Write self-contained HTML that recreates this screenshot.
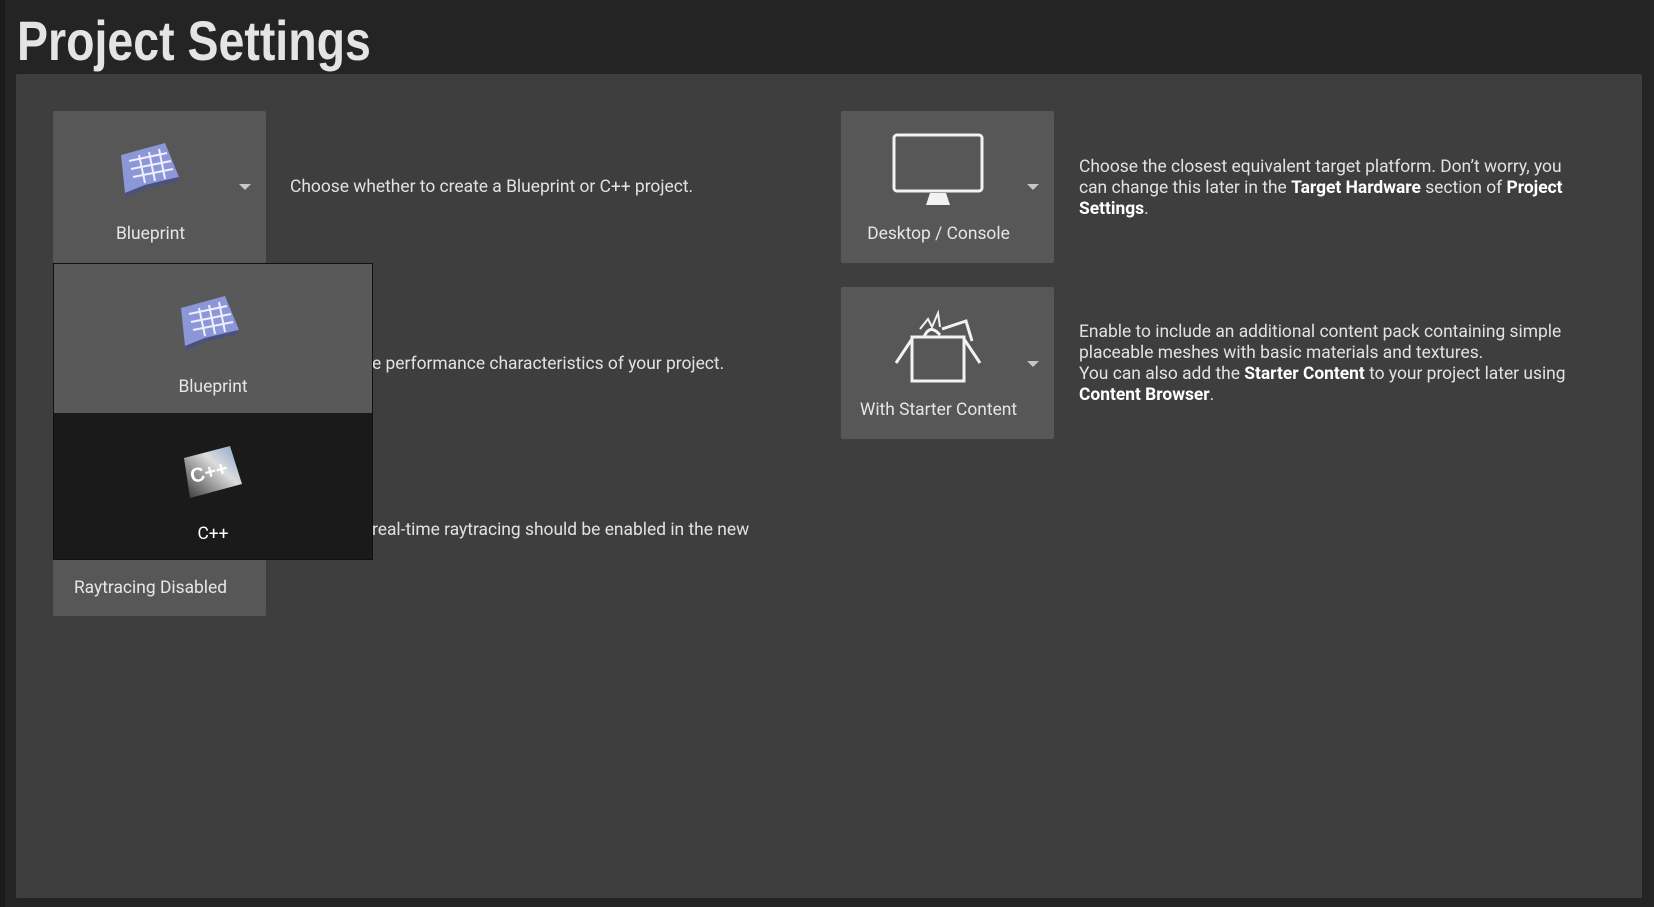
<!DOCTYPE html>
<html><head><meta charset="utf-8"><style>
*{margin:0;padding:0;box-sizing:border-box}
body{width:1654px;height:907px;background:#242424;overflow:hidden;position:relative;font-family:"Roboto","Liberation Sans",sans-serif;color:#e0e0e0}
.strip{position:absolute;left:0;top:0;width:5px;height:907px;background:#1a1a1a}
h1{position:absolute;left:17px;top:8px;font-family:"Liberation Sans Narrow","Liberation Sans",sans-serif;font-weight:bold;font-size:56px;color:#e4e4e4;transform:scaleX(0.83);transform-origin:left;white-space:nowrap}
.panel{position:absolute;left:16px;top:74px;width:1626px;height:824px;background:#3e3e3e;border-radius:2px}
.tile{position:absolute;width:213px;height:152px;background:#575757;border-radius:2px}
.tile .lbl{position:absolute;left:0;width:195px;text-align:center;top:113px;font-size:17.4px;color:#e6e6e6;white-space:nowrap}
.arr{position:absolute;width:0;height:0;border-left:6px solid transparent;border-right:6px solid transparent;border-top:6px solid #c8c8c8}
.txt{position:absolute;font-size:17.4px;line-height:21px;color:#e2e2e2;white-space:nowrap}
.txt b{color:#fff}
.dd{position:absolute;left:53px;top:263px;width:320px;height:297px;background:#1a1a1a;border:1px solid #111}
.dd .a{position:absolute;left:0;top:0;width:318px;height:149px;background:#595959}
.dd .l{position:absolute;width:318px;text-align:center;font-size:17.4px}
</style></head><body>
<div class="strip"></div>
<h1>Project Settings</h1>
<div class="panel"></div>

<div class="tile" style="left:53px;top:111px">
 <svg style="position:absolute;left:62px;top:30px" width="70" height="60" viewBox="0 0 70 60"><path d="M6 14 L50 2 L64 36 L30 44 L10 52 Z" fill="#8c97d8"/><path d="M10 52 L30 44 L64 36 L62 40 L30 48 L12 56Z" fill="#4a5080"/><g stroke="#eef" stroke-width="2" fill="none"><path d="M14 20 L52 12M16 28 L56 20M18 36 L58 28M24 14 L30 42M34 11 L40 40M44 8 L50 38"/></g></svg>
 <div class="lbl">Blueprint</div><div class="arr" style="left:186px;top:73px"></div></div>
<div class="txt" style="left:290px;top:177px">Choose whether to create a Blueprint or C++ project.</div>

<div class="tile" style="left:53px;top:288px"></div>
<div class="txt" style="left:372px;top:354px">e performance characteristics of your project.</div>

<div class="tile" style="left:53px;top:464px"><div class="lbl" style="top:114px;width:195px">Raytracing Disabled</div></div>
<div class="txt" style="left:372px;top:520px">real-time raytracing should be enabled in the new</div>
<div class="txt" style="left:290px;top:541px">project.</div>

<div class="dd"><div class="a"></div>
 <svg style="position:absolute;left:121px;top:30px" width="70" height="60" viewBox="0 0 70 60"><path d="M6 14 L50 2 L64 36 L30 44 L10 52 Z" fill="#8c97d8"/><path d="M10 52 L30 44 L64 36 L62 40 L30 48 L12 56Z" fill="#4a5080"/><g stroke="#eef" stroke-width="2" fill="none"><path d="M14 20 L52 12M16 28 L56 20M18 36 L58 28M24 14 L30 42M34 11 L40 40M44 8 L50 38"/></g></svg>
 <div class="l" style="top:113px;color:#e6e6e6">Blueprint</div>
 <svg style="position:absolute;left:128px;top:180px" width="70" height="60" viewBox="0 0 70 60"><defs><linearGradient id="g" x1="0" y1="1" x2="1" y2="0"><stop offset="0" stop-color="#333"/><stop offset=".6" stop-color="#ddd"/><stop offset="1" stop-color="#7ea0c8"/></linearGradient></defs><path d="M2 14 L48 2 L60 40 L8 54Z" fill="url(#g)"/><text x="8" y="34" font-family="Liberation Sans" font-weight="bold" font-size="20" fill="#fff" transform="rotate(-14 30 28)">C++</text></svg>
 <div class="l" style="top:260px;color:#fff">C++</div>
</div>

<div class="tile" style="left:841px;top:111px">
 <svg style="position:absolute;left:51px;top:22px" width="94" height="80" viewBox="0 0 94 80"><rect x="2" y="2" width="88" height="56" rx="3" fill="none" stroke="#f2f2f2" stroke-width="3"/><path d="M38 60 H54 L58 72 H34Z" fill="#f2f2f2"/></svg>
 <div class="lbl">Desktop / Console</div><div class="arr" style="left:186px;top:73px"></div></div>
<div class="txt" style="left:1079px;top:157px">Choose the closest equivalent target platform. Don’t worry, you<br>can change this later in the <b>Target Hardware</b> section of <b>Project</b><br><b>Settings</b>.</div>

<div class="tile" style="left:841px;top:287px">
 <svg style="position:absolute;left:53px;top:20px" width="92" height="80" viewBox="0 0 92 80"><g fill="none" stroke="#f2f2f2" stroke-width="3"><rect x="18" y="30" width="52" height="44"/><path d="M18 32 L2 56M70 32 L86 56"/><path d="M30 30 Q36 16 46 28"/><path d="M48 22 L72 14 L78 34"/><path d="M26 22 L34 12 L38 20 L44 6 L46 20" stroke-width="2"/></g></svg>
 <div class="lbl">With Starter Content</div><div class="arr" style="left:186px;top:74px"></div></div>
<div class="txt" style="left:1079px;top:322px">Enable to include an additional content pack containing simple<br>placeable meshes with basic materials and textures.<br>You can also add the <b>Starter Content</b> to your project later using<br><b>Content Browser</b>.</div>
</body></html>
